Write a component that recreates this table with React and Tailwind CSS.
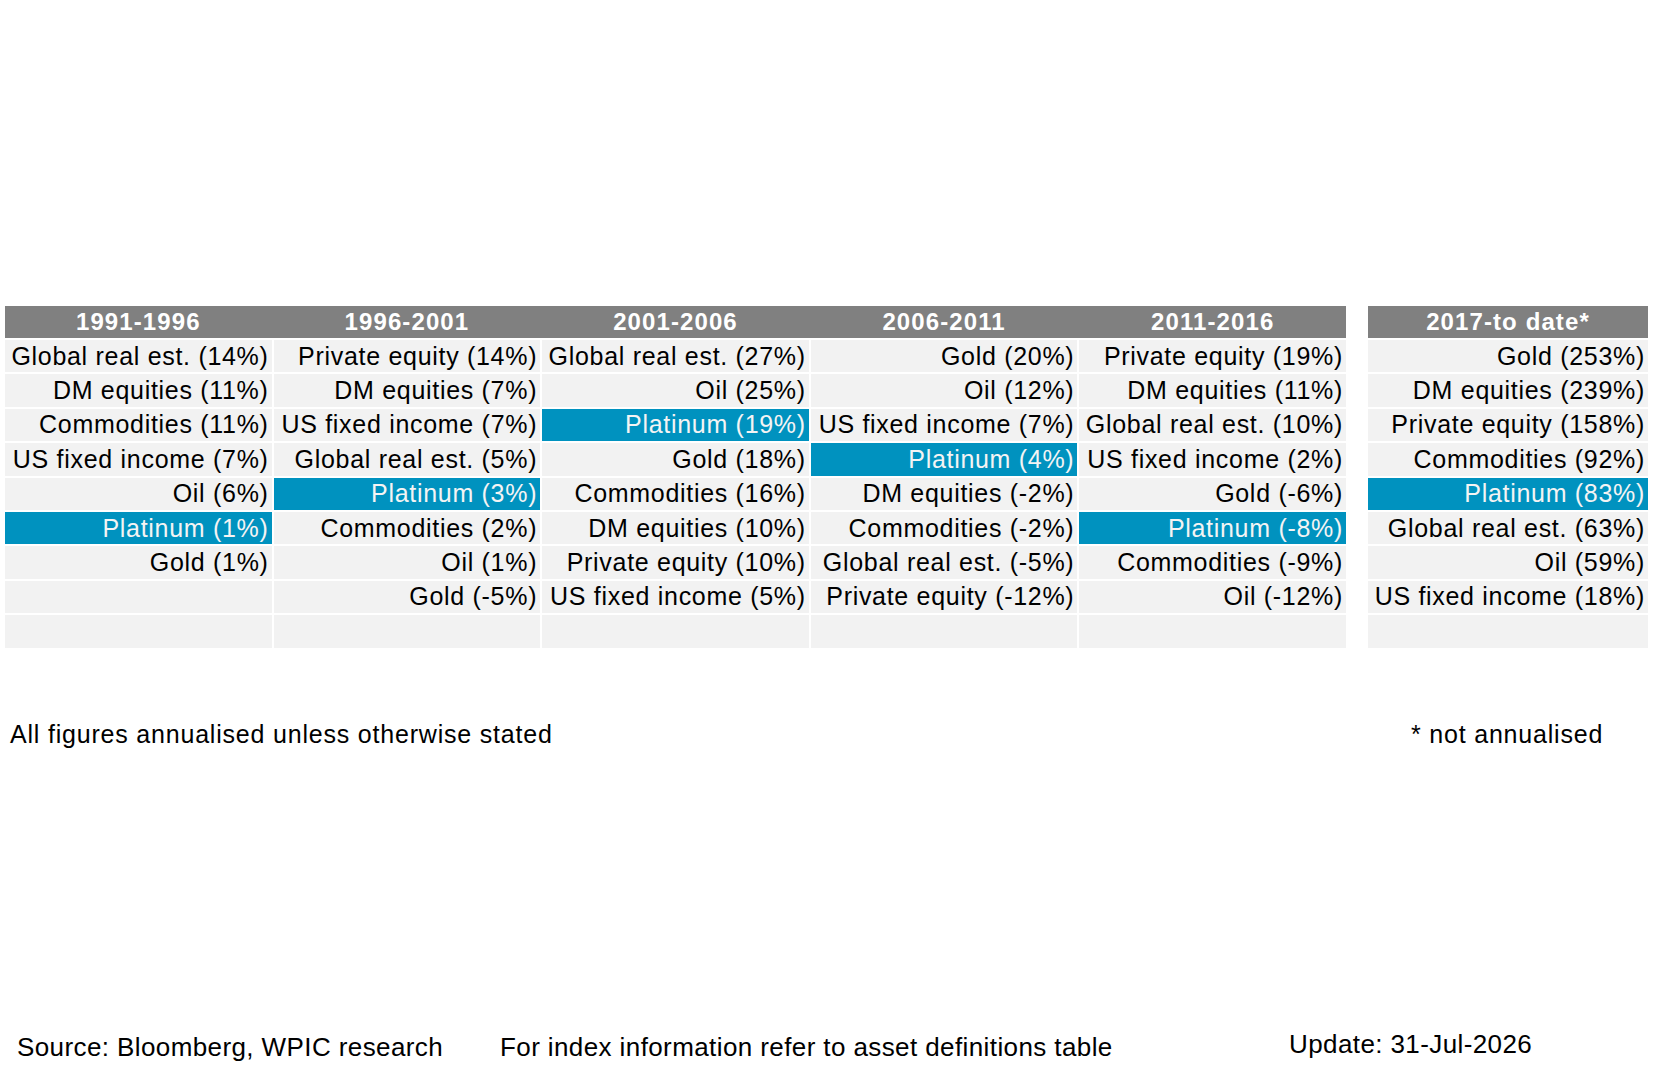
import React from "react";

const periods = [
  {
    title: "1991-1996",
    rows: [
      "Global real est. (14%)",
      "DM equities (11%)",
      "Commodities (11%)",
      "US fixed income (7%)",
      "Oil (6%)",
      "Platinum (1%)",
      "Gold (1%)",
      "",
      "",
    ],
  },
  {
    title: "1996-2001",
    rows: [
      "Private equity (14%)",
      "DM equities (7%)",
      "US fixed income (7%)",
      "Global real est. (5%)",
      "Platinum (3%)",
      "Commodities (2%)",
      "Oil (1%)",
      "Gold (-5%)",
      "",
    ],
  },
  {
    title: "2001-2006",
    rows: [
      "Global real est. (27%)",
      "Oil (25%)",
      "Platinum (19%)",
      "Gold (18%)",
      "Commodities (16%)",
      "DM equities (10%)",
      "Private equity (10%)",
      "US fixed income (5%)",
      "",
    ],
  },
  {
    title: "2006-2011",
    rows: [
      "Gold (20%)",
      "Oil (12%)",
      "US fixed income (7%)",
      "Platinum (4%)",
      "DM equities (-2%)",
      "Commodities (-2%)",
      "Global real est. (-5%)",
      "Private equity (-12%)",
      "",
    ],
  },
  {
    title: "2011-2016",
    rows: [
      "Private equity (19%)",
      "DM equities (11%)",
      "Global real est. (10%)",
      "US fixed income (2%)",
      "Gold (-6%)",
      "Platinum (-8%)",
      "Commodities (-9%)",
      "Oil (-12%)",
      "",
    ],
  },
];

const toDate = {
  title: "2017-to date*",
  rows: [
    "Gold (253%)",
    "DM equities (239%)",
    "Private equity (158%)",
    "Commodities (92%)",
    "Platinum (83%)",
    "Global real est. (63%)",
    "Oil (59%)",
    "US fixed income (18%)",
    "",
  ],
};

const HeaderCell = ({ title }) => (
  <div className="h-[32px] flex items-center justify-center text-white font-bold text-[24px] tracking-[1.1px] leading-none">
    {title}
  </div>
);

const Cells = ({ rows }) => (
  <div className="flex flex-col gap-[2px]">
    {rows.map((row, i) => {
      const isPlatinum = row.startsWith("Platinum");
      return (
        <div
          key={i}
          className={`h-[32.4px] flex items-center justify-end pr-[3px] text-[25px] tracking-[0.7px] leading-none whitespace-nowrap ${
            isPlatinum ? "bg-[#0092bf] text-[#f4f4f4]" : "bg-[#f2f2f2] text-black"
          }`}
        >
          {row}
        </div>
      );
    })}
  </div>
);

export default function App() {
  return (
    <div
      className="w-[1654px] h-[1080px] bg-white flex flex-col pt-[306px]"
      style={{ fontFamily: '"Liberation Sans", Arial, sans-serif' }}
    >
      {/* Table */}
      <div className="flex pl-[5px]">
        <div className="flex flex-col gap-[2px] w-[1341px]">
          <div className="grid grid-cols-5 gap-x-[2px] bg-[#808080]">
            {periods.map((p) => (
              <HeaderCell key={p.title} title={p.title} />
            ))}
          </div>
          <div className="grid grid-cols-5 gap-x-[2px]">
            {periods.map((p) => (
              <Cells key={p.title} rows={p.rows} />
            ))}
          </div>
        </div>
        <div className="ml-[22px] w-[280px] flex flex-col gap-[2px]">
          <div className="bg-[#808080]">
            <HeaderCell title={toDate.title} />
          </div>
          <Cells rows={toDate.rows} />
        </div>
      </div>

      {/* Footnote */}
      <div className="flex items-center mt-[72px] h-[28px] text-[25px] leading-[28px] tracking-[0.8px] text-black">
        <div className="pl-[10px] w-[1411px]">All figures annualised unless otherwise stated</div>
        <div>* not annualised</div>
      </div>

      {/* Source line */}
      <div className="flex items-end mt-[281px] text-[26px] leading-[30px] tracking-[0.4px] text-black">
        <div className="pl-[17px] w-[500px] whitespace-nowrap">Source: Bloomberg, WPIC research</div>
        <div className="w-[789px] whitespace-nowrap">For index information refer to asset definitions table</div>
        <div className="mb-[3px] whitespace-nowrap">Update: 31-Jul-2026</div>
      </div>
    </div>
  );
}
